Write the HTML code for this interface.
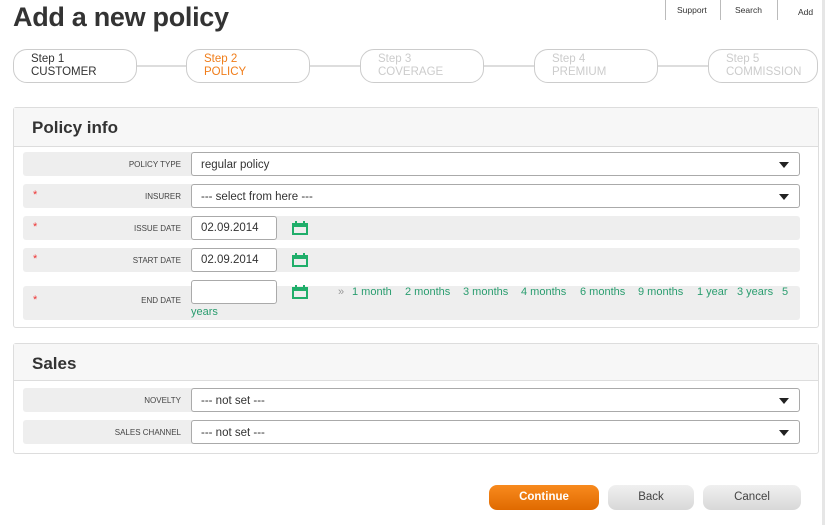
<!DOCTYPE html>
<html><head><style>
body{margin:0;width:825px;height:525px;background:#fff;font-family:"Liberation Sans",sans-serif;position:relative;overflow:hidden;color:#333}
.a{position:absolute}
.pill{position:absolute;top:49px;border:1px solid #ccc;border-radius:14px;background:#fff;font-size:11px;line-height:13px;padding:3px 0 0 17px;box-sizing:border-box;height:34px;color:#ccc}
.pill b{font-weight:normal;display:block;font-size:11.5px}
.panel{position:absolute;left:13px;width:804px;border:1px solid #ddd;border-radius:3px;background:#fff}
.ph{background:#f7f7f7;border-bottom:1px solid #ddd;font-weight:bold;font-size:17px;padding-left:18px;box-sizing:border-box}
.row{position:absolute;left:9px;width:777px;height:24px;background:#eee;border-radius:3px}
.lbl{position:absolute;right:619px;top:8px;font-size:8px;color:#444;text-transform:uppercase;white-space:nowrap}
.star{position:absolute;left:10px;top:5px;color:#e33;font-size:11px}
.sel{position:absolute;left:168px;top:0;width:609px;border:1px solid #aaa;border-radius:3px;background:#fff;font-size:11.5px;line-height:24px;padding-left:9px;box-sizing:border-box;height:24px;color:#333}
.sel:after{content:"";position:absolute;right:10px;top:9px;border-left:5px solid transparent;border-right:5px solid transparent;border-top:6px solid #222}
.inp{position:absolute;left:168px;top:0;width:86px;height:24px;border:1px solid #aaa;border-radius:3px;background:#fff;font-size:11.5px;line-height:23px;padding-left:9px;box-sizing:border-box}
.cal{position:absolute;left:269px;top:5px;width:16px;height:14px}
.btn{position:absolute;top:485px;height:25px;border-radius:8px;font-size:11.5px;text-align:center;line-height:25px}
.g{color:#2a9d6f}
.l{position:absolute;top:0;font-size:11px;color:#2a9d6f;white-space:nowrap}
</style></head><body>
<div class="a" style="left:13px;top:2px;font-size:27px;font-weight:bold;color:#333;letter-spacing:-0.3px">Add a new policy</div>
<div class="a" style="left:665px;top:0;width:1px;height:20px;background:#bbb"></div>
<div class="a" style="left:720px;top:0;width:1px;height:20px;background:#bbb"></div>
<div class="a" style="left:777px;top:0;width:1px;height:20px;background:#bbb"></div>
<div class="a" style="left:677px;top:5px;font-size:8.5px">Support</div>
<div class="a" style="left:735px;top:5px;font-size:8.5px">Search</div>
<div class="a" style="left:798px;top:7px;font-size:8.5px">Add</div>
<div class="a" style="left:822px;top:0;width:3px;height:525px;background:#e6e6e6"></div>
<div class="a" style="left:137px;top:65px;width:600px;height:2px;background:#ddd"></div>
<div class="pill" style="left:13px;width:124px;color:#333"><b>Step 1</b><b>CUSTOMER</b></div>
<div class="pill" style="left:186px;width:124px;color:#f07d1a"><b>Step 2</b><b>POLICY</b></div>
<div class="pill" style="left:360px;width:124px"><b>Step 3</b><b>COVERAGE</b></div>
<div class="pill" style="left:534px;width:124px"><b>Step 4</b><b>PREMIUM</b></div>
<div class="pill" style="left:708px;width:110px"><b>Step 5</b><b>COMMISSION</b></div>

<div class="panel" style="top:107px;height:219px">
 <div class="ph" style="height:39px;line-height:40px">Policy info</div>
 <div class="row" style="top:44px"><span class="lbl">Policy type</span><div class="sel">regular policy</div></div>
 <div class="row" style="top:76px"><span class="star">*</span><span class="lbl">Insurer</span><div class="sel">--- select from here ---</div></div>
 <div class="row" style="top:108px"><span class="star">*</span><span class="lbl">Issue date</span><div class="inp">02.09.2014</div><svg class="cal" viewBox="0 0 16 14"><rect x="1" y="3" width="14" height="10" fill="none" stroke="#1fae6a" stroke-width="2"/><rect x="1" y="3" width="14" height="3" fill="#1fae6a"/><rect x="3" y="0" width="2" height="4" fill="#1fae6a"/><rect x="11" y="0" width="2" height="4" fill="#1fae6a"/></svg></div>
 <div class="row" style="top:140px"><span class="star">*</span><span class="lbl">Start date</span><div class="inp">02.09.2014</div><svg class="cal" viewBox="0 0 16 14"><rect x="1" y="3" width="14" height="10" fill="none" stroke="#1fae6a" stroke-width="2"/><rect x="1" y="3" width="14" height="3" fill="#1fae6a"/><rect x="3" y="0" width="2" height="4" fill="#1fae6a"/><rect x="11" y="0" width="2" height="4" fill="#1fae6a"/></svg></div>
 <div class="row" style="top:178px;height:34px"><span class="star" style="top:8px">*</span><span class="lbl" style="top:10px">End date</span><div class="inp" style="top:-6px"></div><svg class="cal" style="top:-1px" viewBox="0 0 16 14"><rect x="1" y="3" width="14" height="10" fill="none" stroke="#1fae6a" stroke-width="2"/><rect x="1" y="3" width="14" height="3" fill="#1fae6a"/><rect x="3" y="0" width="2" height="4" fill="#1fae6a"/><rect x="11" y="0" width="2" height="4" fill="#1fae6a"/></svg>
 <span class="l" style="left:315px;color:#999">»</span>
 <span class="l" style="left:329px">1 month</span>
 <span class="l" style="left:382px">2 months</span>
 <span class="l" style="left:440px">3 months</span>
 <span class="l" style="left:498px">4 months</span>
 <span class="l" style="left:557px">6 months</span>
 <span class="l" style="left:615px">9 months</span>
 <span class="l" style="left:674px">1 year</span>
 <span class="l" style="left:714px">3 years</span>
 <span class="l" style="left:759px">5</span>
 <div class="a g" style="left:168px;top:20px;font-size:11px">years</div></div>
</div>

<div class="panel" style="top:343px;height:109px">
 <div class="ph" style="height:37px;line-height:40px">Sales</div>
 <div class="row" style="top:44px"><span class="lbl">Novelty</span><div class="sel">--- not set ---</div></div>
 <div class="row" style="top:76px"><span class="lbl">Sales channel</span><div class="sel">--- not set ---</div></div>
</div>

<div class="btn" style="left:489px;width:110px;background:linear-gradient(#f88a1e,#e06a00);color:#fff;font-weight:bold">Continue</div>
<div class="btn" style="left:608px;width:86px;background:linear-gradient(#f0f0f0,#d8d8d8);color:#444">Back</div>
<div class="btn" style="left:703px;width:98px;background:linear-gradient(#f0f0f0,#d8d8d8);color:#444">Cancel</div>
</body></html>
